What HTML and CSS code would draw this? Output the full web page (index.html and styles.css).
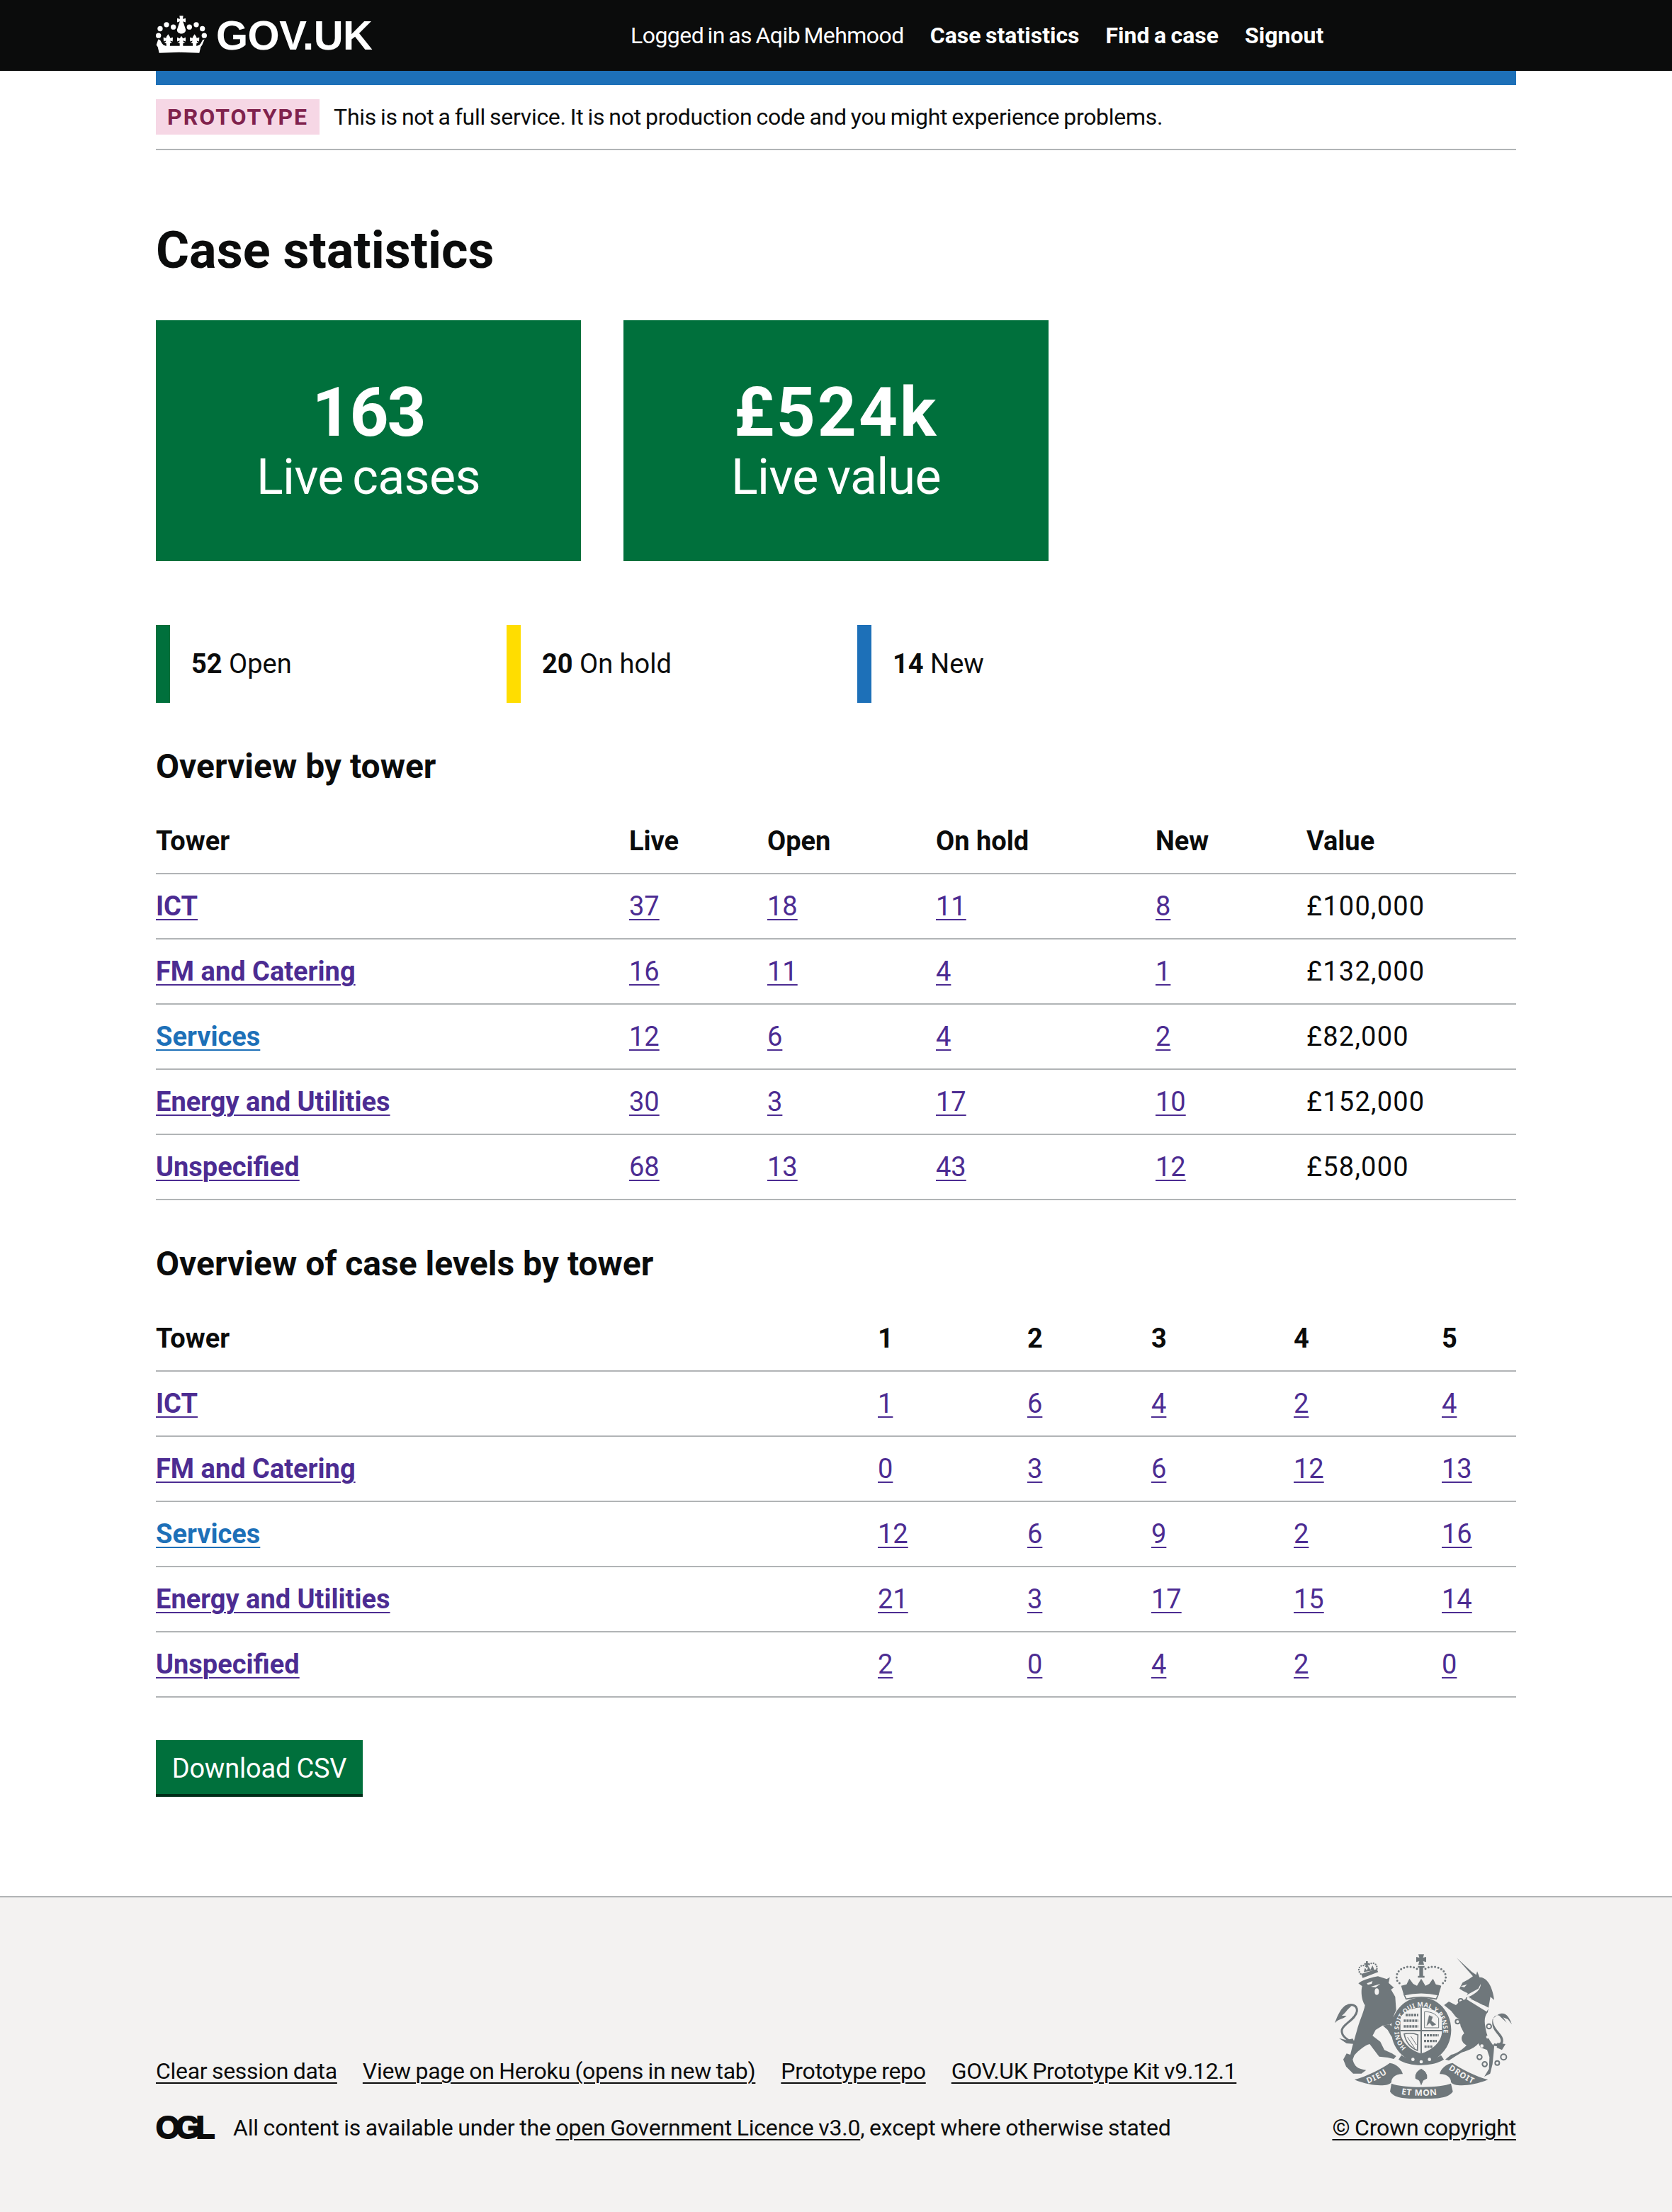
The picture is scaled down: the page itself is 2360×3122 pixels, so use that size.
FILE: index.html
```html
<!DOCTYPE html>
<html lang="en">
<head>
<meta charset="utf-8">
<title>Case statistics</title>
<link rel="stylesheet" href="styles.css">
</head>
<body>
<header class="site-header">
  <div class="wrap header-inner">
    <a class="logo" href="#">
      <svg class="crown" viewBox="60 64 216 158" aria-hidden="true">
        <g fill="#fff">
          <circle cx="71" cy="148" r="11"/><circle cx="78" cy="119" r="11"/><circle cx="105" cy="102" r="11"/><circle cx="134" cy="112" r="11"/>
          <circle cx="202" cy="112" r="11"/><circle cx="231" cy="102" r="11"/><circle cx="257" cy="119" r="11"/><circle cx="265" cy="148" r="11"/>
          <path d="M160 64h16l-2 14 12-3v17l-12-4 3 6 9 28c2 10-6 18-18 18s-20-8-18-18l9-28 3-6-12 4V75l12 3z"/>
          <path d="M168 150l7 10 11-4v17l-11-4 2 6 8 2-10 4v21h-14v-21l-10-4 8-2 2-6-11 4v-17l11 4z"/>
          <path d="M112 142l7 11 2 6 11-3-1 17-10-3 2 5 6 3-9 3-1 20h-14l-1-20-9-3 6-3 2-5-10 3-1-17 11 3 2-6z"/>
          <path d="M224 142l7 11 2 6 11-3-1 17-10-3 2 5 6 3-9 3-1 20h-14l-1-20-9-3 6-3 2-5-10 3-1-17 11 3 2-6z"/>
          <path d="M70 164l8 3 8 14 6 7 10 4h132l10-4 6-7 8-14 8-3-10 24-6 8-6 26-85-3-85 3-6-26-6-8z"/>
        </g>
      </svg>
      <span class="logo-text">GOV.UK</span>
    </a>
    <nav class="nav">
      <span class="nav-user">Logged in as Aqib Mehmood</span>
      <a class="nav-link" href="#">Case statistics</a>
      <a class="nav-link" href="#">Find a case</a>
      <a class="nav-link" href="#">Signout</a>
    </nav>
  </div>
</header>

<div class="wrap">
  <div class="blue-bar"></div>
  <div class="phase">
    <strong class="tag">PROTOTYPE</strong>
    <span class="phase-text">This is not a full service. It is not production code and you might experience problems.</span>
  </div>

  <main>
    <h1 class="title">Case statistics</h1>

    <div class="cards">
      <div class="card"><div class="card-num">163</div><div class="card-label">Live cases</div></div>
      <div class="card"><div class="card-num card-num-wide">£524k</div><div class="card-label">Live value</div></div>
    </div>

    <div class="stats">
      <div class="stat stat-open"><b>52</b> Open</div>
      <div class="stat stat-hold"><b>20</b> On hold</div>
      <div class="stat stat-new"><b>14</b> New</div>
    </div>

    <h2 class="subhead">Overview by tower</h2>
    <table class="data">
      <colgroup><col class="a1"><col class="a2"><col class="a3"><col class="a4"><col class="a5"><col class="a6"></colgroup>
      <thead><tr><th>Tower</th><th>Live</th><th>Open</th><th>On hold</th><th>New</th><th>Value</th></tr></thead>
      <tbody>
        <tr><th><a href="#">ICT</a></th><td><a href="#">37</a></td><td><a href="#">18</a></td><td><a href="#">11</a></td><td><a href="#">8</a></td><td class="money">£100,000</td></tr>
        <tr><th><a href="#">FM and Catering</a></th><td><a href="#">16</a></td><td><a href="#">11</a></td><td><a href="#">4</a></td><td><a href="#">1</a></td><td class="money">£132,000</td></tr>
        <tr><th><a class="fresh" href="#">Services</a></th><td><a href="#">12</a></td><td><a href="#">6</a></td><td><a href="#">4</a></td><td><a href="#">2</a></td><td class="money">£82,000</td></tr>
        <tr><th><a href="#">Energy and Utilities</a></th><td><a href="#">30</a></td><td><a href="#">3</a></td><td><a href="#">17</a></td><td><a href="#">10</a></td><td class="money">£152,000</td></tr>
        <tr><th><a href="#">Unspecified</a></th><td><a href="#">68</a></td><td><a href="#">13</a></td><td><a href="#">43</a></td><td><a href="#">12</a></td><td class="money">£58,000</td></tr>
      </tbody>
    </table>

    <h2 class="subhead second">Overview of case levels by tower</h2>
    <table class="data">
      <colgroup><col class="b1"><col class="b2"><col class="b3"><col class="b4"><col class="b5"><col class="b6"></colgroup>
      <thead><tr><th>Tower</th><th>1</th><th>2</th><th>3</th><th>4</th><th>5</th></tr></thead>
      <tbody>
        <tr><th><a href="#">ICT</a></th><td><a href="#">1</a></td><td><a href="#">6</a></td><td><a href="#">4</a></td><td><a href="#">2</a></td><td><a href="#">4</a></td></tr>
        <tr><th><a href="#">FM and Catering</a></th><td><a href="#">0</a></td><td><a href="#">3</a></td><td><a href="#">6</a></td><td><a href="#">12</a></td><td><a href="#">13</a></td></tr>
        <tr><th><a class="fresh" href="#">Services</a></th><td><a href="#">12</a></td><td><a href="#">6</a></td><td><a href="#">9</a></td><td><a href="#">2</a></td><td><a href="#">16</a></td></tr>
        <tr><th><a href="#">Energy and Utilities</a></th><td><a href="#">21</a></td><td><a href="#">3</a></td><td><a href="#">17</a></td><td><a href="#">15</a></td><td><a href="#">14</a></td></tr>
        <tr><th><a href="#">Unspecified</a></th><td><a href="#">2</a></td><td><a href="#">0</a></td><td><a href="#">4</a></td><td><a href="#">2</a></td><td><a href="#">0</a></td></tr>
      </tbody>
    </table>

    <a class="button" href="#">Download CSV</a>
  </main>
</div>

<footer class="footer">
  <div class="wrap footer-inner">
    <div class="meta">
      <ul class="meta-links">
        <li><a href="#">Clear session data</a></li>
        <li><a href="#">View page on Heroku (opens in new tab)</a></li>
        <li><a href="#">Prototype repo</a></li>
        <li><a href="#">GOV.UK Prototype Kit v9.12.1</a></li>
      </ul>
      <div class="licence">
        <span class="ogl">OGL</span>
        <span>All content is available under the <a href="#">open Government Licence v3.0</a>, except where otherwise stated</span>
      </div>
    </div>
    <div class="copyright">
      <svg class="crest" viewBox="0 0 765 660" aria-hidden="true">
        <defs>
          <path id="ringMotto" d="M318 424A94 100 0 1 1 438 424"/>
          <path id="ribbonL" d="M145 575C185 560 225 540 255 510"/>
          <path id="ribbonR" d="M490 510C530 535 570 565 622 584"/>
          <path id="ribbonM" d="M270 612C330 628 425 628 486 612"/>
        </defs>
        <g fill="#6f777b">
          <!-- lion -->
          <path d="M112 148C125 135 160 125 195 118L232 130L245 122L240 146L262 166L250 174L268 205L272 262C262 280 258 295 262 312L245 322L215 326L185 345L172 370L205 395L222 430L255 445L272 456L262 468L236 462L200 458L175 425L160 405C140 410 115 430 95 452L88 470C95 500 110 510 145 515L125 530L90 530L60 500L48 470L62 445L78 450C85 420 92 395 105 350C115 310 135 270 140 240C125 220 122 180 128 160Z"/>
          <path d="M215 326L245 322L262 342L272 372L278 385L262 382L250 370L236 345Z"/>
          <path d="M60 240C40 250 25 280 12 316C30 296 50 300 62 285L42 285C58 272 70 252 88 240Z"/>
          <path d="M30 380L60 388L88 382L100 405L62 402Z"/>
          <path d="M124 108L190 88L196 100L130 125Z"/>
          <path d="M135 100L140 82L148 94L155 76L163 90L172 72L180 92Z"/>
          <path d="M144 54h8v8h8v7h-8v12h-8v-12h-7v-7h7z"/>
          <!-- centre crown -->
          <path d="M366 25h24l-4 14 13-3v22l-13-4 4 15h-24l4-15-13 4V36l13 3z"/>
          <path d="M364 74h28v8h-6v34h6v8h-28v-8h6V82h-6z"/>
          <path d="M293 158L316 152L328 128L344 150L360 158L378 128L396 158L412 150L428 128L440 152L463 158L452 196H304Z"/>
          <!-- garter ring with shield opening -->
          <path fill-rule="evenodd" d="M378 208C450 208 505 270 505 345C505 420 450 482 378 482C306 482 251 420 251 345C251 270 306 208 378 208ZM290 300V350C290 395 331 430 378 445C425 430 466 395 466 350V300C461 270 421 252 378 250C335 252 295 270 290 300Z"/>
          <path d="M294 452C330 476 426 476 462 452L474 470C430 502 326 502 282 470Z"/>
          <!-- unicorn -->
          <path d="M528 40L593 100L611 112L615 97L625 122C655 120 680 160 687 218L671 205L665 240L660 270C645 285 645 310 650 335C655 370 670 395 687 415L685 440L680 490L670 530L645 543L665 510L667 460L657 430L630 420L620 402C605 420 585 430 550 440L525 455L495 475L480 470L505 450C530 445 555 425 570 410C550 400 540 375 560 360L545 330L540 300L525 290L505 265L475 240L495 225L525 240L540 225L565 215L575 190L555 180L540 170L553 145L580 130L597 118Z"/>
          <path d="M680 300C725 250 750 285 762 322L745 300L725 292L740 314L708 284C695 278 680 290 682 310C690 350 730 365 725 395C720 420 700 415 680 412L688 402C700 405 714 405 715 390C715 365 670 350 680 300Z"/>
          <path d="M700 400L735 405L720 430L698 420Z"/>
          <!-- ribbons -->
          <path d="M95 556C150 540 210 510 245 485C275 490 295 510 300 532C270 530 250 550 252 566C240 586 170 586 95 556Z"/>
          <path d="M661 556C606 540 546 510 511 485C481 490 461 510 456 532C486 530 506 550 504 566C516 586 586 586 661 556Z"/>
          <path d="M252 572C300 592 456 592 504 572L512 606C490 640 420 636 378 636C336 636 266 640 246 606Z"/>
        </g>
        <g fill="#f3f2f1">
          <ellipse cx="190" cy="183" rx="9" ry="14"/>
          <path d="M148 148L172 138L168 150L152 154Z"/>
          <path d="M165 162L205 150L185 165Z"/>
          <circle cx="660" cy="375" r="7"/><circle cx="635" cy="413" r="7"/>
          <path d="M545 160L572 152L560 165Z"/>
          <path d="M560 210L575 195L620 170L630 150C630 175 610 190 580 205Z"/>
          <path d="M570 215L575 204L665 252L655 268Z"/>
          <circle cx="343" cy="470" r="7"/><circle cx="378" cy="480" r="7"/><circle cx="413" cy="470" r="7"/>
        </g>
        <path fill="#6f777b" d="M582 212h9v-6h5v6l9 3v-7h5v10l8 4v-8h5v10l9 5v-8h5v11l8 4-3 5-60-30Z"/>
        <g fill="none" stroke="#6f777b">
          <path d="M122 108C102 88 122 60 150 78C160 54 196 58 190 90" stroke-width="7" stroke-linecap="round" stroke-dasharray="0 10"/>
          <path d="M360 86C320 64 262 88 276 136L294 156" stroke-width="9" stroke-linecap="round" stroke-dasharray="0 14"/>
          <path d="M396 86C436 64 494 88 480 136L462 156" stroke-width="9" stroke-linecap="round" stroke-dasharray="0 14"/>
          <path d="M100 400C70 392 38 372 42 345C46 320 102 300 106 265C108 240 82 232 60 245" stroke-width="9"/>
          <g stroke-width="6">
            <circle cx="545" cy="222" r="9"/><circle cx="532" cy="310" r="9"/>
            <circle cx="665" cy="330" r="10"/><circle cx="625" cy="460" r="10"/><circle cx="647" cy="490" r="10"/>
            <circle cx="700" cy="485" r="9"/><circle cx="727" cy="460" r="12"/>
          </g>
          <path d="M306 196C350 186 406 186 450 196L442 214C400 204 356 204 314 214Z" fill="#f3f2f1" stroke-width="5"/>
          <path d="M378 250V445M290 348H466" stroke-width="6"/>
          <g stroke-width="10" stroke-dasharray="9 3">
            <path d="M312 282H366M304 306H366M304 330H366"/>
            <path d="M390 368H452M390 392H444M392 416H426"/>
          </g>
          <path d="M392 268C420 268 440 276 452 296V336H392Z" stroke-width="3"/>
          <path d="M402 326L412 284L426 290L420 306L440 322L424 328L414 314Z" fill="#6f777b" stroke-width="2"/>
          <path d="M306 362C325 358 345 358 364 366L362 432C332 420 312 394 306 362Z" stroke-width="5"/>
          <path d="M320 376L350 422M334 372L358 408" stroke-width="3"/>
          <path d="M378 508C360 518 348 532 352 552L368 560L378 584L388 560L404 552C408 532 396 518 378 508Z" fill="#6f777b" stroke="#f3f2f1" stroke-width="3"/>
        </g>
        <g>
          <text class="ring-text"><textPath href="#ringMotto" startOffset="1%">HONI SOIT QUI MAL Y PENSE</textPath></text>
          <text class="ribbon-text"><textPath href="#ribbonL" startOffset="6%">DIEU</textPath></text>
          <text class="ribbon-text"><textPath href="#ribbonR" startOffset="2%">DROIT</textPath></text>
          <text class="ribbon-text ribbon-mid"><textPath href="#ribbonM" startOffset="11%">ET MON</textPath></text>
        </g>
      </svg>
      <a href="#">© Crown copyright</a>
    </div>
  </div>
</footer>
</body>
</html>
```

FILE: styles.css
```css
* { box-sizing: border-box; }
html, body { margin: 0; padding: 0; }
body {
  font-family: Roboto, "Noto Sans", sans-serif;
  font-size: 38px;
  line-height: 50px;
  color: #0b0c0c;
  background: #fff;
}
a { color: inherit; }
.wrap { width: 1920px; margin: 0 auto; }

.site-header { background: #0b0c0c; height: 100px; color: #fff; }
.header-inner { display: flex; align-items: center; height: 100px; }
.logo { display: flex; align-items: center; color: #fff; text-decoration: none; width: 670px; }
.crown { width: 72px; height: 53px; display: block; margin-top: -4px; }
.logo-text {
  font-family: "Liberation Sans", sans-serif;
  font-weight: 700;
  font-size: 58px;
  line-height: 60px;
  letter-spacing: -0.5px;
  margin-left: 13px;
}
.nav { display: flex; font-size: 32px; line-height: 50px; gap: 37px; white-space: nowrap; }
.nav-user { word-spacing: -2px; letter-spacing: -0.55px; }
.nav-link { color: #fff; font-weight: 700; text-decoration: none; word-spacing: -1.5px; }

.blue-bar { height: 20px; background: #1d70b8; }
.phase {
  display: flex;
  align-items: center;
  gap: 20px;
  margin-top: 20px;
  padding-bottom: 20px;
  border-bottom: 2px solid #b1b4b6;
  font-size: 32px;
  line-height: 50px;
}
.phase-text { word-spacing: -1.5px; letter-spacing: -0.3px; }
.tag {
  background: #f6d7e5;
  color: #80224d;
  padding: 0 16px;
  font-size: 32px;
  letter-spacing: 2px;
  font-weight: 700;
}

.title { font-size: 72px; line-height: 80px; font-weight: 700; margin: 102px 0 58px; }

.cards { display: flex; gap: 60px; }
.card {
  width: 600px;
  height: 340px;
  background: #00703c;
  color: #fff;
  text-align: center;
  padding-top: 80px;
}
.card-num { font-size: 96px; line-height: 100px; font-weight: 700; letter-spacing: -2px; }
.card-num-wide { letter-spacing: 3px; }
.card-label { font-size: 70px; line-height: 82px; word-spacing: -4px; letter-spacing: -0.7px; }

.stats { display: flex; margin-top: 90px; }
.stat {
  width: 495px;
  height: 110px;
  line-height: 110px;
  border-left: 20px solid #00703c;
  padding-left: 30px;
}
.stat-hold { border-left-color: #ffdd00; }
.stat-new { border-left-color: #1d70b8; }

.subhead { font-size: 48px; line-height: 60px; font-weight: 700; margin: 60px 0 29px; }

.data { width: 100%; border-collapse: collapse; table-layout: fixed; }
.data th, .data td {
  text-align: left;
  padding: 20px 0;
  height: 92px;
  border-bottom: 2px solid #b1b4b6;
  line-height: 50px;
}
.data th { font-weight: 700; }
.data .money { letter-spacing: 1.2px; }
.data a { color: #4c2c92; text-decoration-thickness: 2px; text-underline-offset: 5px; }
.data a.fresh { color: #1d70b8; }

.a1 { width: 668px; } .a2 { width: 195px; } .a3 { width: 238px; }
.a4 { width: 310px; } .a5 { width: 213px; } .a6 { width: 296px; }
.b1 { width: 1019px; } .b2 { width: 211px; } .b3 { width: 175px; }
.b4 { width: 201px; } .b5 { width: 209px; } .b6 { width: 105px; }

.button {
  display: block;
  margin: 60px 0 144px;
  background: #00703c;
  color: #fff;
  text-decoration: none;
  width: 292px;
  height: 76px;
  line-height: 80px;
  text-align: center;
  word-spacing: -1px;
  letter-spacing: -0.2px;
  box-shadow: 0 4px 0 #002d18;
}

.footer {
  background: #f3f2f1;
  border-top: 2px solid #b1b4b6;
  height: 446px;
  font-size: 32px;
  line-height: 50px;
  padding-top: 72px;
  word-spacing: -1px;
  letter-spacing: -0.2px;
}
.footer a { text-decoration-thickness: 2px; text-underline-offset: 5px; }
.footer-inner { display: flex; justify-content: space-between; align-items: flex-end; }
.meta-links { list-style: none; margin: 0 0 30px; padding: 0; display: flex; gap: 36px; white-space: nowrap; letter-spacing: -0.3px; }
.licence { display: flex; align-items: center; gap: 29px; white-space: nowrap; }
.ogl {
  font-family: "Liberation Sans", sans-serif;
  font-weight: 700;
  font-size: 44px;
  letter-spacing: -6px;
  -webkit-text-stroke: 2px #0b0c0c;
  line-height: 50px;
  width: 80px;
}
.copyright { display: flex; flex-direction: column; align-items: flex-end; white-space: nowrap; }
.crest { width: 255px; height: 220px; display: block; margin-bottom: 8px; margin-right: 5px; }
.ring-text, .ribbon-text {
  font-family: "Noto Sans", sans-serif;
  font-weight: 700;
  fill: #f3f2f1;
  word-spacing: 0;
}
.ring-text { font-size: 27px; letter-spacing: 0.5px; }
.ribbon-text { font-size: 34px; letter-spacing: 3px; }
.ribbon-mid { font-size: 36px; letter-spacing: 2px; }
```
